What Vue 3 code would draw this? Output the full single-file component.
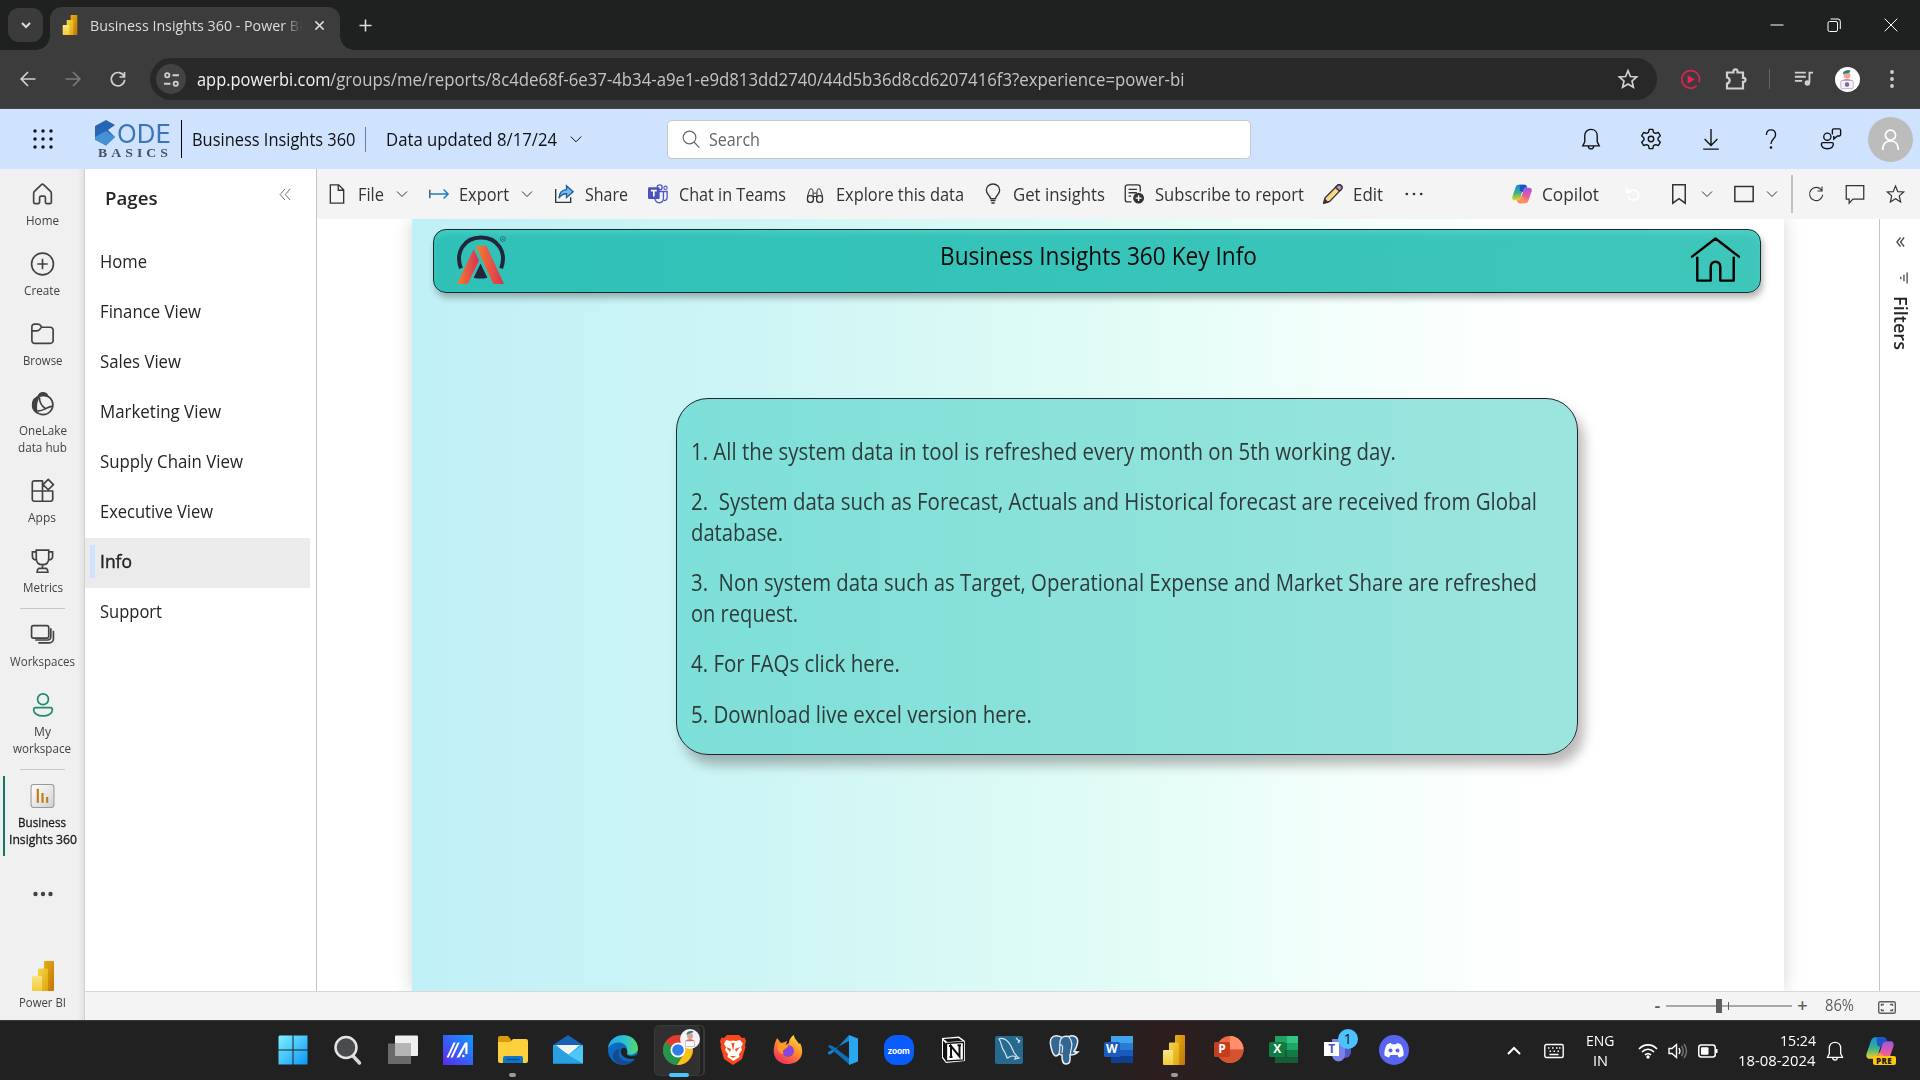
<script setup>
import { h } from 'vue'

// Condenses or widens a label so that it fills its intended length.
const vFit = {
  mounted(el, { value }) {
    const box = el.getBoundingClientRect()
    if (el.classList.contains('vertical')) {
      el.style.transform = `scaleY(${(value / box.height).toFixed(4)})`
      el.style.marginBottom = (value - box.height).toFixed(2) + 'px'
      return
    }
    el.style.transform = `scaleX(${(value / box.width).toFixed(4)})`
    el.style.marginRight = (value - box.width).toFixed(2) + 'px'
  },
}

const icons = {
  home: '<path d="M3.500 11.500C3.500 10.500 3.800 10 4.500 9.300L11 3q1-.8 2 0l6.500 6.300c.7.700 1 1.200 1 2.200V20q0 1.200-1.200 1.200H16q-1.200 0-1.200-1.200v-4.500q0-1.500-1.500-1.500h-2.600q-1.500 0-1.500 1.500V20q0 1.200-1.200 1.200H4.700Q3.500 21.200 3.500 20z" />',
  create: '<circle cx="12" cy="12" r="10.500"/><path d="M12 7v10M7 12h10"/>',
  browse: '<path d="M1.800 9V5A2.500 2.500 0 0 1 4.300 2.500h3.200c1.200 0 2 .5 2.700 1.400L11.200 5.500H19.500A2.700 2.700 0 0 1 22.200 8.200v10A2.700 2.700 0 0 1 19.500 21H4.500a2.700 2.700 0 0 1-2.700-2.700V9M1.800 9h4.700c2.600 0 2.400-1.500 4.700-3.500"/>',
  onelake: '<circle cx="12.600" cy="12.800" r="9.400"/><path d="M4 7.500C1.200 11.500 2 17.500 6.500 20.300 5.500 15 5.500 10 8.500 5.200zM8 4.500C9.500 .3 15.500.3 16.800 4.200c-2.500-.6-5.800-.4-8.800.3z" fill="currentColor"/><path d="M9 5.500c0 5 2 8.500 6.500 11.500M7 18.500c6 1 7.500-3.500 14.500-4.500"/>',
  apps: '<path d="M2.200 12V4A1.800 1.800 0 0 1 4 2.200h8v19.600H4A1.800 1.800 0 0 1 2.200 20v-8h19.600v8a1.800 1.800 0 0 1-1.800 1.800h-8M17.500.800l5 5-5 5-5-5z" stroke-linejoin="round"/>',
  metrics: '<path d="M6 1.500h12V9c0 4-2 6.500-6 6.500S6 13 6 9zM6 3.200H2.300V7.500c0 2.500 1.200 3.500 4 3.500M18 3.200h3.700V7.500c0 2.500-1.200 3.500-4 3.500M12 15.500V19M8.500 19h7c1.400.8 1.700 1.800 1.700 3.800H6.800c0-2 .3-3 1.700-3.800z"/>',
  workspaces: '<rect x="1.500" y="3" width="16.500" height="12" rx="1.800"/><path d="M20 5.500v8.300a3 3 0 0 1-3 3H5M22.500 8v7.500a4 4 0 0 1-4 4H8"/>',
  person: '<circle cx="12.500" cy="6.500" r="5.200"/><path d="M5.500 14.500h14c1.400 0 2 .8 2 2 0 3.500-4 6-9 6s-9-2.500-9-6c0-1.200.6-2 2-2z"/>',
  report: '<defs><linearGradient id="rg" x1="0" y1="0" x2="1" y2="1"><stop stop-color="#fff"/><stop offset="1" stop-color="#d0d0d0"/></linearGradient></defs><rect x="1" y="1" width="22" height="22" rx="2.500" fill="url(#rg)" stroke="#999" stroke-width="1"/><path d="M7.500 5v13.500M12 9v9.500M16.500 13v5.500" stroke="#c07a0c" stroke-width="2"/>',
  file: '<path d="M4 1h10l6 6v16H4zM13.500 1v6.500H20"/>',
  export: '<path d="M1 7v10" stroke="#444"/><path d="M1 12h22M17.500 6.500 23 12l-5.500 5.500" stroke="#1f7bc4" stroke-width="1.700"/>',
  share: '<path d="M2 6v16h18v-6" /><path d="M6 17C6.500 9.500 10 6.800 15 6.700V2l8 7.200-8 7.100V11.700c-4.500 0-7 1.500-9 5.300z" fill="#7cb8ea" stroke="#1a5fa0"/>',
  teams: '<circle cx="14" cy="4" r="3" stroke="#5059c9" fill="#fff" stroke-width="1.600"/><circle cx="21" cy="4.500" r="2" stroke="#5059c9" stroke-width="1.300"/><path d="M17 9h6v7c0 3-2 4-4 4M8 17c.5 3 2.500 5.500 5.500 5.500 3.500 0 5-2.500 5-6V9H13" stroke="#5059c9" stroke-width="1.600"/><rect x="0" y="4" width="14" height="14" rx="1.500" fill="#4b53bc" stroke="none"/><path d="M3.500 8h7M7 8v7" stroke="#fff" stroke-width="2"/>',
  explore: '<rect x="3" y="14" width="7" height="8" rx="3"/><rect x="14" y="14" width="7" height="8" rx="3"/><path d="M3 17V14.500L5.200 8a2 2 0 0 1 4.300 0L10 17M21 17v-2.500L18.800 8a2 2 0 0 0-4.300 0L14 17M10 11h4M10 15h4" stroke-width="1.200"/>',
  bulb: '<path d="M9 17.500C9 14 4 12.500 4 7.500a8 7.500 0 0 1 16 0c0 5-5 6.500-5 10zM9 19.800h6M10 22.800h4" stroke-width="1.600"/>',
  subscribe: '<path d="M9 21.500H4.500A3 3 0 0 1 1.500 18.500V4a3 3 0 0 1 3-3h12a3 3 0 0 1 3 3v5M5.500 6.500h10M5.500 10.500h10M5.500 14.500h3"/><circle cx="17.500" cy="17" r="6.500" fill="#333" stroke="none"/><path d="M17.500 13.500v7M14 17h7" stroke="#fff"/>',
  edit: '<path d="m1 23 1.500-6.500L17 2a2.700 2.700 0 0 1 5 4.500L8 21z" fill="#fbd68a"/><path d="m15 4 2-2a2.700 2.700 0 0 1 5 4.500l-2.500 2z" fill="#c48ad0"/><path d="m1 23 1-4.500L5.500 22z" fill="#444"/>',
  bookmark: '<path d="M4.500 1h15v22L12 17.500 4.500 23z"/>',
  frame: '<rect x="1" y="3" width="22" height="18"/>',
  refresh: '<path d="M19.500 7A8.800 8.800 0 1 0 21 13M20 2v6h-6"/>',
  comment: '<path d="M1.500 2h21v16H9.500L5 23V18H1.500z"/>',
  star: '<path d="m12 2 2.900 7 7.500.5-5.600 4.900 1.700 7.600L12 18l-6.500 4 1.700-7.600L1.600 9.500 9.100 9z"/>',
  bell: '<path d="M12 1.500c-4.200 0-6.800 3-6.800 7v6.500L3 19.500h18L18.800 15V8.500c0-4-2.600-7-6.800-7zM9 20c.3 1.800 1.300 2.800 3 2.800s2.700-1 3-2.800"/>',
  gear: '<circle cx="12" cy="12" r="3"/><path d="M10 1.500h4l.7 3.200 2.200 1.200 3.200-1 2.100 3.600-2.500 2.300v2.400l2.500 2.300-2.100 3.600-3.200-1-2.200 1.200-.7 3.200h-4l-.7-3.200-2.200-1.200-3.200 1-2.100-3.600 2.500-2.300v-2.400L1.800 8.500l2.100-3.600 3.200 1 2.200-1.200z" stroke-linejoin="round"/>',
  download: '<path d="M12 1v18M5 12l7 7 7-7M3.500 23h17"/>',
  help: '<path d="M7 7.500C7 4 9 2 12 2S17 4.200 17 7.300C17 11.500 12 12 12 17.500"/><circle cx="12" cy="21.300" r=".7" fill="currentColor"/>',
  feedback: '<circle cx="8" cy="9.500" r="3.900"/><path d="M3 16h10c1 0 1.500.6 1.500 1.500 0 3-2.500 5.200-6.500 5.200S1.500 20.500 1.500 17.500C1.500 16.600 2 16 3 16zM13.500 7V2.500A1.500 1.500 0 0 1 15 1h6A1.500 1.500 0 0 1 22.500 2.500v4.700A1.500 1.500 0 0 1 21 8.700H19L15 12V8.700"/>',
  user: '<circle cx="12" cy="7" r="5.800"/><path d="M3 24c0-6.500 3.400-10.500 9-10.500s9 4 9 10.500"/>',
  search: '<circle cx="10" cy="10" r="8.500"/><path d="m16 16 7 7.500"/>',
  pbi: '<defs><linearGradient id="p1" x2="1" y2="1"><stop stop-color="#e8b012"/><stop offset="1" stop-color="#c07408"/></linearGradient><linearGradient id="p2" x2="1" y2="1"><stop stop-color="#f5d64a"/><stop offset="1" stop-color="#e0a50c"/></linearGradient><linearGradient id="p3" x2="0" y2="1"><stop stop-color="#f9e589"/><stop offset="1" stop-color="#f2cb35"/></linearGradient></defs><g stroke="none"><rect x="13" width="10" height="30" rx="1" fill="url(#p1)"/><path d="M7 8.500A1 1 0 0 1 8 7.500h8a1 1 0 0 1 1 1V30H7z" fill="url(#p2)"/><path d="M1 16a1 1 0 0 1 1-1h8a1 1 0 0 1 1 1v14H2a1 1 0 0 1-1-1z" fill="url(#p3)"/></g>',
  copilot: '<defs><linearGradient id="c1" x2="0" y2="1"><stop stop-color="#1b8fe0"/><stop offset=".5" stop-color="#35b08f"/><stop offset="1" stop-color="#f5d020"/></linearGradient><linearGradient id="c2" x2="0" y2="1"><stop stop-color="#9b55e8"/><stop offset=".55" stop-color="#ee5a9a"/><stop offset="1" stop-color="#ff9a4d"/></linearGradient></defs><g stroke="none"><path d="M15 1H8C5.500 1 4.600 3 3.800 5.500L.500 15c-.8 2.800.4 4.500 2.700 4.500H7c1.800 0 2.600-1 3.200-3L13 7z" fill="url(#c1)"/><path d="M9 23h7c2.500 0 3.400-2 4.200-4.500L23.500 9c.8-2.800-.4-4.500-2.700-4.500H17c-1.800 0-2.600 1-3.200 3L11 17z" fill="url(#c2)"/><path d="M9 1h6.500c1.800 0 2.200 1.500 2.700 3.500H17c-1.800 0-2.600 1-3.200 3L13 10 9.500 8z" fill="#1d55c8"/><path d="M15 23H8.500C7 23 6.300 21.500 5.800 19.500H7c1.800 0 2.600-1 3.200-3l.8-2.500 3.500 2z" fill="#ff8f5a"/></g>',
}

const Icon = (p) => h('svg', { viewBox: p.box || '0 0 24 24', innerHTML: icons[p.name], class: 'ico' })
Icon.props = ['name', 'box']

const rail = [
  { icon: 'home', lines: [['Home', 33]] },
  { icon: 'create', lines: [['Create', 36]] },
  { icon: 'browse', lines: [['Browse', 39.500]] },
  { icon: 'onelake', lines: [['OneLake', 48], ['data hub', 49]] },
  { icon: 'apps', lines: [['Apps', 28]] },
  { icon: 'metrics', lines: [['Metrics', 40]], rule: true },
  { icon: 'workspaces', lines: [['Workspaces', 65]] },
  { icon: 'person', lines: [['My', 17], ['workspace', 58]], rule: true, tone: 'green' },
  { icon: 'report', lines: [['Business', 48], ['Insights 360', 68]], tone: 'active' },
]

const pages = [
  ['Home', 47], ['Finance View', 101], ['Sales View', 81], ['Marketing View', 121],
  ['Supply Chain View', 143], ['Executive View', 113], ['Info', 32], ['Support', 62],
]

const actions = [
  { icon: 'file', text: 'File', w: 26, menu: true },
  { icon: 'export', text: 'Export', w: 50, menu: true },
  { icon: 'share', text: 'Share', w: 43 },
  { icon: 'teams', text: 'Chat in Teams', w: 107 },
  { icon: 'explore', text: 'Explore this data', w: 128 },
  { icon: 'bulb', text: 'Get insights', w: 92 },
  { icon: 'subscribe', text: 'Subscribe to report', w: 149 },
  { icon: 'edit', text: 'Edit', w: 30 },
]

const notes = [
  [['1. All the system data in tool is refreshed every month on 5th working day.', 705]],
  [['2.\u00a0 System data such as Forecast, Actuals and Historical forecast are received from Global', 846], ['database.', 92]],
  [['3.\u00a0 Non system data such as Target, Operational Expense and Market Share are refreshed', 846], ['on request.', 107]],
  [['4. For FAQs click here.', 209]],
  [['5. Download live excel version here.', 341]],
]
</script>

<template>
  <div class="screen">
    <!-- browser tab strip -->
    <div class="tabs">
      <div class="tabmenu"><svg viewBox="0 0 12 12" class="s12"><path d="m2 4 4 4 4-4" stroke-width="2" /></svg></div>
      <div class="tab">
        <Icon name="pbi" box="0 0 24 30" class="fav" />
        <div class="tabtitle"><span v-fit="213">Business Insights 360 - Power BI</span></div>
        <svg viewBox="0 0 12 12" class="s12 tabx"><path d="m1.500 1.500 9 9m0-9-9 9" stroke-width="1.600" /></svg>
      </div>
      <svg viewBox="0 0 14 14" class="plus"><path d="M7 .5v13M.5 7h13" stroke-width="1.700" /></svg>
      <div class="winbtns">
        <svg viewBox="0 0 14 14"><path d="M.5 7h13" /></svg>
        <svg viewBox="0 0 14 14"><rect x="1" y="3.500" width="9.500" height="10" rx="1.500" /><path d="M3.500 1H11a2.300 2.300 0 0 1 2.300 2.300V11" /></svg>
        <svg viewBox="0 0 14 14"><path d="m.7.700 12.600 12.600m0-12.600L.7 13.300" /></svg>
      </div>
    </div>

    <!-- browser address bar -->
    <div class="navbar">
      <div class="navbtns">
        <svg viewBox="0 0 16 16"><path d="M15.500 8H1.500M8 1 1.200 8 8 15" /></svg>
        <svg viewBox="0 0 16 16" class="dim"><path d="M.5 8h14M8 1l6.800 7L8 15" /></svg>
        <svg viewBox="0 0 16 16"><path d="M14 5.200A6.700 6.700 0 1 0 14.700 8.800M14.500 1v5h-5" /></svg>
      </div>
      <div class="omnibox">
        <div class="tune"><svg viewBox="0 0 16 16"><circle cx="4" cy="4" r="2" /><path d="M9 4h6M1 12h6" /><circle cx="12" cy="12" r="2" /></svg></div>
        <span v-fit="133.500" class="host">app.powerbi.com</span><span v-fit="854.500" class="path">/groups/me/reports/8c4de68f-6e37-4b34-a9e1-e9d813dd2740/44d5b36d8cd6207416f3?experience=power-bi</span>
        <Icon name="star" class="fave" />
      </div>
      <div class="exts">
        <svg viewBox="0 0 22 22" class="rec"><path d="M17.500 17.500A9.200 9.200 0 1 1 19.800 14M14.500 19.500a9 9 0 0 1-3 .7" /><path d="M8 6.500v9l7.500-4.500z" fill="#f0205a" stroke="none" /></svg>
        <svg viewBox="0 0 22 22" class="puz"><path d="M2 4.500h6.500V3.300a2 2 0 0 1 4 0v1.200H18v5.300h.5a2 2 0 0 1 0 4H18v6.700H2v-5c3.500-.5 3.500-5.500 0-6z" /></svg>
        <i class="vr"></i>
        <svg viewBox="0 0 22 22" class="mus"><path d="M1 4h12M1 8.500h12M1 13h8M17 15V4h4" /><circle cx="14.700" cy="15.500" r="2" fill="#c7c7c7" /></svg>
        <svg viewBox="0 0 26 26" class="me"><circle cx="13" cy="13" r="13" fill="#fff" /><circle cx="12.500" cy="8.500" r="3.500" fill="#e9a98c" /><path d="M8.500 8c-.5-4 3-5 7.500-4.500-.5 2-1 3-3.500 3-2 0-3 .2-4 1.500z" fill="#23798b" /><path d="M7 15c.5-3 10.500-3 11 0z" fill="#d8404c" /><rect x="6" y="14" width="13" height="8.500" rx="1" fill="#f2f0f8" stroke="#b0a5c8" stroke-width=".8" /><circle cx="12.500" cy="18.200" r="1.300" fill="none" stroke="#77639a" /></svg>
        <svg viewBox="0 0 4 20" class="kebab"><circle cx="2" cy="3" r="1.900" /><circle cx="2" cy="10" r="1.900" /><circle cx="2" cy="17" r="1.900" /></svg>
      </div>
    </div>

    <!-- app header -->
    <header class="head">
      <svg viewBox="0 0 20 20" class="waffle"><template v-for="r in 3" :key="r"><circle v-for="c in 3" :key="c" :cx="r * 8 - 6" :cy="c * 8 - 6" r="1.700" /></template></svg>
      <div class="brand">
        <svg viewBox="0 0 22 26" class="cube"><path d="M0 6 11 0l9 5-7 5 7 7-9 8.500L0 19z" fill="#2866b4" /><path d="M0 17l11-6 9 6-9 8.500L0 20z" fill="#4690d4" /></svg>
        <div class="brandtext"><span v-fit="54" class="ode">ODE</span></div>
        <span v-fit="74" class="basics">BASICS</span>
      </div>
      <i class="bar1"></i>
      <span v-fit="163.500" class="htitle">Business Insights 360</span>
      <i class="bar2"></i>
      <span v-fit="171" class="hdate">Data updated 8/17/24</span>
      <svg viewBox="0 0 12 12" class="s12 hchev"><path d="m.7 3.500 5.300 5.300 5.300-5.300" /></svg>
      <div class="searchbox"><Icon name="search" /><span v-fit="51">Search</span></div>
      <div class="hicons">
        <Icon v-for="n in ['bell', 'gear', 'download', 'help', 'feedback']" :key="n" :name="n" />
      </div>
      <div class="avatar"><Icon name="user" /></div>
    </header>

    <div class="body">
      <!-- left rail -->
      <nav class="rail">
        <template v-for="r in rail" :key="r.icon">
          <div class="ritem" :class="r.tone">
            <Icon :name="r.icon" />
            <div v-for="l in r.lines" :key="l[0]" class="rl"><span v-fit="l[1]">{{ l[0] }}</span></div>
          </div>
          <div v-if="r.rule" class="rrule"></div>
        </template>
        <svg viewBox="0 0 20 6" class="rdots"><circle cx="2.500" cy="3" r="2.200" /><circle cx="10" cy="3" r="2.200" /><circle cx="17.500" cy="3" r="2.200" /></svg>
        <div class="rpbi"><Icon name="pbi" box="0 0 24 30" /><div class="rl"><span v-fit="47">Power BI</span></div></div>
      </nav>

      <div class="work">
        <div class="upper">
          <!-- page list -->
          <aside class="pages">
            <div class="phead">
              <span v-fit="52.500">Pages</span>
              <svg viewBox="0 0 12 14"><path d="M6 1 .8 7 6 13M11.500 1 6.300 7l5.200 6" /></svg>
            </div>
            <div v-for="p in pages" :key="p[0]" class="page" :class="{ on: p[0] === 'Info' }"><span v-fit="p[1]">{{ p[0] }}</span></div>
          </aside>

          <div class="main">
            <div class="toolbar">
              <div v-for="a in actions" :key="a.text" class="act">
                <Icon :name="a.icon" />
                <span v-fit="a.w">{{ a.text }}</span>
                <svg v-if="a.menu" viewBox="0 0 12 12" class="s12"><path d="m1 3.500 5 5 5-5" /></svg>
              </div>
              <svg viewBox="0 0 20 6" class="more"><circle cx="2" cy="3" r="1.500" /><circle cx="10" cy="3" r="1.500" /><circle cx="18" cy="3" r="1.500" /></svg>
              <div class="tright">
                <Icon name="copilot" class="cop" /><span v-fit="57" class="coptext">Copilot</span>
                <svg viewBox="0 0 20 20" class="undo"><path d="M2 2v6h6M3 7.500C7 3 17 4 17 11.500c0 8-12 8-13 1" /></svg>
                <Icon name="bookmark" class="bm" />
                <svg viewBox="0 0 12 12" class="s12 c1"><path d="m1 3.500 5 5 5-5" /></svg>
                <Icon name="frame" class="fr" />
                <svg viewBox="0 0 12 12" class="s12 c2"><path d="m1 3.500 5 5 5-5" /></svg>
                <i class="tvr"></i>
                <Icon name="refresh" class="rf" /><Icon name="comment" class="cm" /><Icon name="star" class="st" />
              </div>
            </div>

            <div class="canvas">
              <div class="stage">
                <div class="report">
                  <div class="banner">
                    <svg viewBox="0 0 50 52" class="alogo">
                      <defs><linearGradient id="a1"><stop stop-color="#f08030" /><stop offset="1" stop-color="#dc2f55" /></linearGradient></defs>
                      <path d="M4 35C-2 19 7 3.500 24.500 3.500S51 19 45 35" fill="none" stroke="#23253a" stroke-width="4" />
                      <path d="M17 15.500 22.500 27 11 51H0z" fill="url(#a1)" /><path d="M19 12h11l18 39H37z" fill="url(#a1)" />
                      <path d="M24 30l7 14.500q-7 2-14 0z" fill="#23253a" /><circle cx="46.800" cy="5" r="2.500" fill="none" stroke="#24555a" stroke-width=".7" /><circle cx="46.800" cy="5" r=".8" fill="#24555a" />
                    </svg>
                    <span v-fit="317" class="btitle">Business Insights 360 Key Info</span>
                    <svg viewBox="0 0 52 48" class="bhome"><path d="M1.500 20.500 26 1.500l24.500 19M7 21.500v24h14V31c0-7 10-7 10 0v14.500h14v-24" /></svg>
                  </div>
                  <div class="card">
                    <div v-for="(n, i) in notes" :key="i" class="note">
                      <div v-for="l in n" :key="l[0]"><span v-fit="l[1]">{{ l[0] }}</span></div>
                    </div>
                  </div>
                </div>
              </div>
              <aside class="filters">
                <svg viewBox="0 0 10 12" class="fchev"><path d="M5 1 1 6l4 5M9 1 5 6l4 5" /></svg>
                <svg viewBox="0 0 10 12" class="ficon"><path d="M9 0v12M5.500 2.500v7M2 4.500v3" /></svg>
                <span v-fit="54" class="vertical">Filters</span>
              </aside>
            </div>
          </div>
        </div>
        <footer class="status">
          <b>-</b>
          <svg viewBox="0 0 126 14" class="slider"><path d="M0 7h126M62.500 3v8" /><rect x="50" y="0" width="6" height="14" fill="#605e5c" stroke="none" /></svg>
          <b>+</b>
          <span v-fit="29" class="pct">86%</span>
          <svg viewBox="0 0 18 13" class="fit"><rect x=".7" y=".7" width="16.600" height="11.600" rx="1.500" /><path d="M3.500 5V3.500H6M12 3.500h2.500V5M14.500 8v1.500H12M6 9.500H3.500V8" /></svg>
        </footer>
      </div>
    </div>

    <!-- desktop taskbar -->
    <div class="taskbar">
      <div class="dock">
        <div><svg viewBox="0 0 30 30"><defs><linearGradient id="w" x2="1" y2="1" gradientUnits="userSpaceOnUse" gradientTransform="scale(30)"><stop stop-color="#80f3ff" /><stop offset="1" stop-color="#0a93f8" /></linearGradient></defs><path d="M1.500.500H14.500v14H.500v-13zM15.500 .500h14v14h-14zM.500 15.500h14v14H.500zM15.500 15.500h14v14h-14z" fill="url(#w)" /></svg></div>
        <div><svg viewBox="0 0 30 30"><path d="m20 21 6.500 7" stroke="#d5d8db" stroke-width="3.500" stroke-linecap="round" /><circle cx="13" cy="12.500" r="10.500" fill="#4a4b4c" stroke="#e2e4e6" stroke-width="2.500" /></svg></div>
        <div><svg viewBox="0 0 30 30"><rect x="7" y=".5" width="23" height="20.500" rx="1" fill="#efefef" /><path d="M0 8.500h23V29H0z" fill="#777" fill-opacity=".85" /><path d="M7 8.500h16V21H7z" fill="#b5b5b5" /></svg></div>
        <div><svg viewBox="0 0 30 30"><defs><linearGradient id="m" x1="0" y1="1" x2="1" y2="0"><stop stop-color="#5a28f0" /><stop offset="1" stop-color="#109cff" /></linearGradient></defs><path d="M0 0h30v30H0z" fill="url(#m)" /><path d="m3.500 22.500 7-15h2.200l-7 15zM7.500 22.500l7-15h2.200l-7 15zM13.500 22.500l8.500-15h2.500V19h-2.200v-7.500l-6 11z" fill="#fff" /><circle cx="20.300" cy="21" r="1.300" fill="#fff" /></svg></div>
        <div class="run"><svg viewBox="0 0 30 30"><path d="M0 3a2 2 0 0 1 2-2h8l3 3.500V8H0z" fill="#dc9a06" /><path d="M0 7h12l3-3h13a2 2 0 0 1 2 2v20a2 2 0 0 1-2 2H2a2 2 0 0 1-2-2z" fill="#fccf3d" /><path d="M5 28v-5a2 2 0 0 1 2-2h16a2 2 0 0 1 2 2v5z" fill="#0d76c8" /><path d="M8.500 24.500h13" stroke="#064c8a" stroke-width="1.500" /></svg></div>
        <div><svg viewBox="0 0 30 30"><path d="M0 10 15 0l15 10v2H0z" fill="#1463b5" /><path d="M0 10h30v18.500H0z" fill="#2ba7e8" /><path d="M3 10h24L15 20z" fill="#f4f4f4" /><path d="m0 10 30 18.500H0z" fill="#28a0e4" /><path d="M30 10v18.500L15 20z" fill="#4fc8f5" /></svg></div>
        <div><svg viewBox="0 0 30 30"><defs><linearGradient id="e"><stop stop-color="#1fa8e8" /><stop offset=".6" stop-color="#2fc3cf" /><stop offset="1" stop-color="#58dc5a" /></linearGradient></defs><circle cx="15" cy="15" r="15" fill="#0c69bd" /><path d="M0 13C2-3 28-5 30 13c0 6-7 8-11 6-2-1 0-2 0-5C18 6 6 5 0 13z" fill="url(#e)" /><path d="M11 16c-2 8 7 13 15 9-6 7-16 6-20 0-3-5 0-11 6-11z" fill="#134a92" /><path d="M13 15c-1 5 3 8 9 9h6l2-5c-4 3-10 3-11 0 0-1 1-2 0-4-1-3-5-3-6 0z" fill="#212121" /></svg></div>
        <div class="focus"><svg viewBox="0 0 30 30"><circle cx="15" cy="15" r="15" fill="#e33b2e" /><path d="M15 15 2 7.500A15 15 0 0 0 14 30l7-11z" fill="#23964a" /><path d="M15 8h13A15 15 0 0 1 14 30l7.500-12z" fill="#fbc116" /><circle cx="15" cy="15" r="7.500" fill="#fff" /><circle cx="15" cy="15" r="5.800" fill="#2f7de9" /></svg>
          <svg viewBox="0 0 20 20" class="pbadge"><circle cx="10" cy="10" r="10" fill="#f3f3f5" /><circle cx="10" cy="7" r="3" fill="#e0a08b" /><path d="M6.500 6c0-4 4-4.500 7-3.500-.5 2-4 1-7 3.500z" fill="#23798b" /><path d="M5.500 12.500c1-3 8-3 9 0z" fill="#d8404c" /><rect x="5.500" y="12" width="9" height="5.500" fill="#fff" stroke="#b9aecb" stroke-width=".7" /></svg></div>
        <div><svg viewBox="0 0 30 30"><path d="m9 0h12l3 3 2.500-.5L28 6l-1 4 .5 2-3.500 12-9 6-9-6L2.500 12 3 10 2 6l1.500-3.500L6 3z" fill="#f8481c" /><path d="m8 5 4 1 3-.5 3 .5 4-1 3 4-2 3 1 3-3 4 .500 3-6 4-6-4 .500-3-3-4 1-3-2-3z" fill="#fff" /><path d="m8 12 5 2-1 3zM22 12l-5 2 1 3zM12 21h6l-3 2zM13.500 8h3L15 16z" fill="#f8481c" /></svg></div>
        <div><svg viewBox="0 0 30 30"><defs><linearGradient id="f" x1=".8" y1="0" x2=".2" y2="1"><stop stop-color="#ffe23c" /><stop offset=".45" stop-color="#ff8a2c" /><stop offset="1" stop-color="#ef2766" /></linearGradient></defs><path d="M2 8 4 3l4 5 4-1c1-1 2-1 2-1l-1 4 3-2c0-4 3-7 5-8 0 4 3 5 5 9l1-1c6 12-1 21-12 21S-2 21 2 8z" fill="url(#f)" /><circle cx="15" cy="16" r="6" fill="#8747d8" /><path d="M5 9c5-2 8 1 11 2l-4 3c-2 1-3 3-1 5-5 0-8-5-6-10z" fill="#ff9b25" /></svg></div>
        <div><svg viewBox="0 0 30 30"><path d="M21 0 5 17.500l-3.500 2.300L0 18.500V17L21 6z" fill="#1585d0" /><path d="M0 11.500 1.800 10l3.500 1.500L22 24v6z" fill="#0d6fb8" /><path d="m21 0 9 3.500v23L21 30V0z" fill="#2aa5f0" /></svg></div>
        <div><svg viewBox="0 0 30 30"><rect width="30" height="30" rx="12" fill="#0b5cff" /></svg><b class="zoom">zoom</b></div>
        <div><svg viewBox="0 0 30 30"><path d="m3 3 17-1.500 6 4.500v20l-19 2-4-5z" fill="#fff" /><path d="m4.500 4 15-1 4 3-15 1z" fill="#111" /><path d="M7.500 8.500 24.500 7.300v17.500L7.500 26z" fill="#fff" stroke="#111" stroke-width="1.300" /><path d="m4 5.500 3 3V26l-3-4z" fill="#111" /><path d="M12 22v-11l8.500 10.500V10M10 11h3M18.500 10.300h3.500M10.500 22h3" stroke="#111" stroke-width="2" fill="none" /></svg></div>
        <div><svg viewBox="0 0 30 30"><rect x="1" y="1" width="28" height="28" rx="2" fill="#276a90" /><path d="M5 4c5-2 9 2 12 7 2 4 2 8 8 12l-4 1 1-2c-5-3-7 1-9 1-1-3-1-4-3-7-3-3-2-8-5-12zM22 3l4 4M24 8l2-3" stroke="#d9e8ef" stroke-width="1.200" fill="none" /></svg></div>
        <div><svg viewBox="0 0 30 30"><path d="M9 1C3 0 0 4 2 12c1 5 3 9 5 9 2-.5 3-2 3-2s2 1 3 1c0 4 0 9 4 9 5 0 4-5 4-9 3 0 6-1 8-3-2 0-3 0-4-.5C28 12 31 4 26 1.500c-3-1.500-6 0-6 0s-5-1-7 1C12 1.500 10.500 1.200 9 1z" fill="#336791" stroke="#e6edf2" stroke-width="1.500" /><path d="M13 2.500C9 6 12 12 10 19M20 2c4 5 3 9 2 13-1 2 0 4-1 5M11 10c3-1 3 3 2 8" stroke="#e6edf2" stroke-width="1.200" fill="none" /></svg></div>
        <div class="office"><svg viewBox="0 0 30 30"><path d="M7 1h22v8H7z" fill="#41a5ee" /><path d="M7 8h22v8H7z" fill="#2b7cd3" /><path d="M7 15h22v7H7z" fill="#185abd" /><path d="M7 21h22v7H7z" fill="#103f91" /><rect y="7" width="16" height="15" rx="1.500" fill="#185abd" /></svg><b>W</b></div>
        <div class="run"><Icon name="pbi" box="0 0 24 30" /></div>
        <div class="office"><svg viewBox="0 0 30 30"><circle cx="16" cy="14.500" r="13.500" fill="#ed6c47" /><path d="M16 1A13.500 13.500 0 0 1 29.500 14.500H16z" fill="#ff8f6b" /><path d="M3 18a13.500 13.500 0 0 0 26.500-3.500H16z" fill="#d35230" /><rect y="7" width="16" height="15" rx="1.500" fill="#c43e1c" /></svg><b>P</b></div>
        <div class="office"><svg viewBox="0 0 30 30"><path d="M6 1h12v8H6z" fill="#21a366" /><path d="M18 1h11v8H18z" fill="#33c481" /><path d="M6 8h12v7H6z" fill="#107c41" /><path d="M18 8h11v7H18z" fill="#21a366" /><path d="M6 15h23v13H6z" fill="#185c37" /><path d="M18 15h11v7H18z" fill="#107c41" /><rect y="7" width="16" height="15" rx="1.500" fill="#107c41" /></svg><b>X</b></div>
        <div class="office tm"><svg viewBox="0 0 30 30"><path d="M16 8h11v9a6 6 0 0 1-6 6h-5z" fill="#5059c9" /><path d="M8 4h13v16a6.500 6.500 0 0 1-13 0z" fill="#7b83eb" /><rect y="7" width="15" height="14" fill="#fff" /></svg><b>T</b><i>1</i></div>
        <div><svg viewBox="0 0 30 30"><circle cx="15" cy="15" r="15" fill="#5865f2" /><path d="M8 9.500c2-1.200 4-1.500 4-1.500l.8 1.300h4.400L18 8s2 .3 4 1.500c2 3 3 7 2.500 11-2 1.500-4.500 2-4.500 2L18.500 20h-7L10 22.500s-2.500-.5-4.500-2C5 16.500 6 12.500 8 9.500z" fill="#fff" /><circle cx="11.500" cy="15.500" r="2" fill="#5865f2" /><circle cx="18.500" cy="15.500" r="2" fill="#5865f2" /></svg></div>
      </div>
      <div class="tray">
        <svg viewBox="0 0 14 14" class="up"><path d="m1 10 6-6 6 6" stroke-width="2" /></svg>
        <svg viewBox="0 0 20 16" class="kb"><rect x=".8" y="1.500" width="18.400" height="13" rx="1.500" stroke-width="1.400" /><path d="M4 5h1.500M8 5h1.500M12 5h1.500M15 5h1.500M5.500 8.200H7M9.500 8.200H11M13.500 8.200H15M5.500 11.500h9" stroke-width="1.500" /></svg>
        <div class="lang"><span v-fit="28.500">ENG</span><span v-fit="15">IN</span></div>
        <svg viewBox="0 0 20 16" class="wifi"><path d="M1 6C6 .500 14 .500 19 6M4 9c3.500-3.700 8.500-3.700 12 0M7 12c1.700-1.800 4.300-1.800 6 0" stroke-width="1.600" /><circle cx="10" cy="14" r="1.700" fill="#fff" stroke="none" /></svg>
        <svg viewBox="0 0 20 16" class="spk"><path d="M1 5.500h3L8.500 1.500v13L4 10.500H1z" stroke-width="1.400" /><path d="M11 5q1.800 3 0 6" stroke-width="1.400" /><path d="M13.500 3q3.500 5 0 10M16 1q5 7 0 14" stroke="#777" stroke-width="1.400" /></svg>
        <svg viewBox="0 0 20 16" class="bat"><rect x=".8" y="2" width="16.400" height="12" rx="2.500" stroke-width="1.500" /><rect x="3" y="4.200" width="7.500" height="7.600" rx="1" fill="#fff" stroke="none" /><path d="M18.500 6v4" stroke-width="2" /></svg>
        <div class="clock"><span v-fit="36" class="t1">15:24</span><span v-fit="77.500" class="t2">18-08-2024</span></div>
        <Icon name="bell" class="tbell" />
        <div class="pre"><Icon name="copilot" /><b>PRE</b></div>
      </div>
    </div>
  </div>
</template>

<style>
body { margin: 0; background: #212121; overflow: hidden; }
svg { display: block; flex: none; fill: none; stroke: currentColor; overflow: visible; }
.ico { width: 20px; height: 20px; stroke-width: 1.5; }
</style>

<style scoped>
.screen { width: 1920px; height: 1080px; display: flex; flex-direction: column; overflow: hidden; font-family: "Open Sans", "Noto Sans", sans-serif; font-size: 17.500px; color: #252423; white-space: nowrap; }
.screen * { box-sizing: border-box; }
.screen span { display: inline-block; flex: none; transform-origin: 0 0; }
.s12 { width: 12px; height: 12px; }

.tabs { height: 50px; flex: none; background: #1f2120; color: #dcdcdc; display: flex; align-items: center; font-size: 15px; }
.tabmenu { width: 35px; height: 34px; margin: 0 7px 0 8px; border-radius: 11px; background: #3b3b3b; display: grid; place-items: center; }
.tab { position: relative; align-self: flex-end; width: 290px; height: 43px; background: #3c3c3c; border-radius: 12px 12px 0 0; display: flex; align-items: center; padding: 0 0 7px 11px; }
.tab::before, .tab::after { content: ""; position: absolute; bottom: 0; width: 14px; height: 14px; }
.tab::before { left: -14px; background: radial-gradient(circle at 0 0, transparent 13.500px, #3c3c3c 14px); }
.tab::after { right: -14px; background: radial-gradient(circle at 100% 0, transparent 13.500px, #3c3c3c 14px); }
.fav { width: 18px; height: 20px; margin-right: 11px; }
.tabtitle { width: 212px; overflow: hidden; -webkit-mask-image: linear-gradient(90deg, #000 91%, transparent 100%); mask-image: linear-gradient(90deg, #000 91%, transparent 100%); }
.tabx { margin-left: 12px; width: 11px; height: 11px; }
.plus { width: 13px; height: 13px; margin-left: 19px; }
.winbtns { margin-left: auto; display: flex; gap: 43px; margin-right: 22px; color: #fff; }
.winbtns svg { width: 14px; height: 14px; }

.navbar { height: 59px; flex: none; background: #3c3c3c; display: flex; align-items: center; color: #d0d0d0; border-bottom: 1px solid #4b4848; }
.navbtns { width: 150px; display: flex; gap: 29px; padding-left: 19.500px; flex: none; }
.navbtns svg { width: 16px; height: 16px; stroke-width: 1.700; }
.navbtns .dim { color: #7a7a7a; }
.omnibox { width: 1507px; height: 42px; border-radius: 21px; background: #282828; display: flex; align-items: center; flex: none; font-size: 17.300px; }
.tune { width: 30px; height: 30px; margin: 0 10.500px 0 6px; border-radius: 50%; background: #434343; display: grid; place-items: center; }
.tune svg { width: 17px; height: 17px; stroke-width: 1.700; }
.host { color: #f0f0f0; }
.path { color: #c4c4c4; }
.fave { margin-left: auto; margin-right: 19px; stroke-width: 2; }
.exts { flex: 1; display: flex; align-items: center; padding-left: 22.500px; stroke-width: 2; }
.rec { width: 21px; height: 21px; color: #d82455; stroke-width: 1.800; }
.puz { width: 22px; height: 22px; margin-left: 24px; stroke-width: 2.200; }
.vr { width: 1px; height: 20px; background: #666; margin: 0 24px 0 22px; }
.mus { width: 20px; height: 20px; stroke-width: 2; }
.me { width: 25px; height: 25px; margin-left: 21px; stroke: none; }
.kebab { width: 4px; height: 20px; margin-left: 30px; fill: currentColor; stroke: none; }

.head { height: 60px; flex: none; background: #cfe3ff; display: flex; align-items: center; color: #111; }
.waffle { width: 20px; height: 20px; margin: 0 42.500px 0 32.500px; fill: #111; stroke: none; }
.brand { width: 86px; height: 40px; display: grid; grid-template-columns: 22px 64px; grid-template-rows: 26px 14px; justify-items: start; margin-top: 2px; }
.cube { width: 22px; height: 26px; stroke: none; }
.brandtext { height: 26px; line-height: 26px; margin-top: 2px; }
.ode { height: 24px; line-height: 24px; font-family: Inter, sans-serif; font-size: 25px; font-weight: 400; color: #3b76b8; }
.basics { grid-column: 1 / 3; font-family: "Liberation Serif", serif; font-weight: 700; font-size: 13.500px; line-height: 14px; height: 14px; letter-spacing: 4px; color: #4a5060; margin-left: 3px; }
.bar1 { width: 1px; height: 38px; background: #000; }
.htitle { margin-left: 10px; }
.bar2 { width: 1px; height: 25px; background: #6d7b90; margin: 0 20.500px 0 9px; }
.hchev { margin-left: 13px; }
.searchbox { width: 584px; height: 39px; margin-left: 85px; background: #fff; border: 1px solid #c8c8c8; border-radius: 5px; display: flex; align-items: center; gap: 9px; padding-left: 14px; color: #666; }
.searchbox .ico { width: 18px; height: 18px; }
.hicons { margin-left: auto; display: flex; gap: 38px; margin-right: 26px; }
.hicons .ico { width: 22px; height: 22px; }
.avatar { width: 45px; height: 45px; border-radius: 50%; background: #bcbcbc; color: #fff; display: grid; place-items: center; margin-right: 7px; }
.avatar .ico { width: 21px; height: 21px; stroke-width: 2; }

.body { flex: 1; min-height: 0; display: flex; }
.rail { width: 85px; flex: none; background: linear-gradient(90deg, #f0f0f0 92%, #e2e2e2); display: flex; flex-direction: column; align-items: center; font-size: 12.500px; color: #424242; border-right: 1px solid #d0d0d0; }
.ritem { width: 100%; padding: 12px 0 10px; display: flex; flex-direction: column; align-items: center; }
.ritem .ico { width: 25px; height: 26px; margin-bottom: 5px; stroke-width: 1.600; margin-left: 1px; }
.ritem .rl, .rpbi .rl { height: 17px; line-height: 17px; margin-left: 1px; }
.green .ico { color: #1f8a70; }
.active { position: relative; color: #1a1a1a; -webkit-text-stroke: .3px; }
.active::before { content: ""; position: absolute; left: 3px; top: 5px; width: 2px; height: 80px; background: #117865; }
.rrule { width: 45px; height: 1px; background: #c8c8c8; margin: 2px 0 1px; flex: none; }
.rdots { width: 20px; height: 6px; fill: #424242; stroke: none; margin: 33px 0 0 1px; }
.rpbi { margin-top: auto; margin-bottom: 9px; display: flex; flex-direction: column; align-items: center; gap: 3px; }
.rpbi .ico { width: 24px; height: 30px; margin-left: 2px; }

.work { flex: 1; display: flex; flex-direction: column; min-width: 0; }
.upper { flex: 1; min-height: 0; display: flex; border-bottom: 1px solid #d8d8d8; }
.pages { width: 232px; flex: none; background: #fff; border-right: 1px solid #c4c4c4; }
.phead { height: 69px; padding: 0 25px 11px 20px; display: flex; justify-content: space-between; align-items: center; font-size: 18px; font-weight: 600; }
.phead svg { width: 12px; height: 13px; color: #666; margin-bottom: 7px; }
.page { height: 50px; line-height: 46px; padding-left: 15px; width: 225px; }
.page.on { background: linear-gradient(#cfe3ff, #cfe3ff) 5px 7px / 5px 33px no-repeat #ebebeb; -webkit-text-stroke: .4px; }

.main { flex: 1; display: flex; flex-direction: column; min-width: 0; }
.toolbar { height: 50px; flex: none; background: #f4f4f4; display: flex; align-items: center; padding-left: 10px; color: #333; }
.act { display: flex; align-items: center; margin-right: 19.600px; }
.act:nth-child(-n+3) { margin-right: 20.700px; }
.act .ico { margin-right: 10.300px; stroke-width: 1.600; }
.act:nth-child(-n+3) .ico { margin-right: 10.800px; }
.act:nth-child(n+5) { margin-right: 19.200px; }
.act .s12 { margin-left: 12px; }
.more { width: 18px; height: 6px; fill: #333; stroke: none; margin-left: 3px; }
.tright { margin-left: auto; display: flex; align-items: center; padding-right: 15.500px; }
.coptext { margin-left: 10px; }
.undo { width: 16px; height: 16px; margin-left: 26px; color: #fff; stroke-width: 2; }
.bm { margin-left: 28px; stroke-width: 1.800; }
.c1 { margin-left: 12px; }
.fr { margin-left: 21px; stroke-width: 1.800; }
.c2 { margin-left: 12px; }
.tvr { width: 2px; height: 38px; background: #c5bfba; margin: 0 14px 0 13px; }
.rf { width: 18px; height: 20px; }
.cm { margin-left: 20px; }
.st { margin-left: 21px; width: 19px; }

.canvas { flex: 1; min-height: 0; display: flex; background: #fff; }
.stage { flex: 1; overflow: hidden; padding-left: 95px; }
.report { width: 1372px; height: 100%; background: linear-gradient(90deg, #c0f0f7 0, #cdf5f5 24%, #e2fcf6 52%, #f5fffc 70%, #fff 82%); box-shadow: 0 0 18px rgba(0, 0, 0, .17); padding: 10px 21px 0; }
.banner { width: 1328px; height: 64px; border: 1px solid #102c2c; border-radius: 13px; background: linear-gradient(90deg, #2fc1b8, #3fc6ba); box-shadow: 2px 5px 6px rgba(80, 80, 80, .4), inset 0 6px 8px -4px rgba(130, 230, 225, .4); display: flex; align-items: center; padding: 0 19px 0 22.500px; }
.alogo { width: 49px; height: 51px; stroke: none; margin-bottom: 3px; }
.btitle { margin-top: -12px; margin-left: 434px; font-size: 25.500px; color: #0b0b0b; }
.bhome { width: 51px; height: 46px; color: #000; stroke-width: 2.500; stroke-linecap: round; stroke-linejoin: round; margin: 0 0 3px auto; }
.card { width: 902px; height: 357px; margin: 105px 0 0 243px; padding: 36.500px 14px; border: 1px solid #223; border-radius: 32px; background: linear-gradient(90deg, #7ddfd9, #8be2da 45%, #9ce5de); box-shadow: 6px 10px 12px rgba(70, 60, 60, .36); font-size: 23px; line-height: 31.200px; color: #2f3b3b; }
.note { margin-bottom: 19px; }
.note > div { height: 31.200px; }

.filters { width: 41px; flex: none; border-left: 1px solid #c4c4c4; display: flex; flex-direction: column; align-items: center; color: #444; padding-top: 17px; }
.fchev { width: 9px; height: 12px; stroke-width: 1.400; }
.ficon { width: 9px; height: 12px; margin: 24px 0 0 6px; stroke-width: 1.400; }
.vertical { writing-mode: vertical-rl; font-size: 18px; font-weight: 600; margin: 12px 0 0 1px; line-height: 20px; color: #252423; }

.status { height: 28px; flex: none; background: #f4f4f4; display: flex; align-items: center; justify-content: flex-end; padding-right: 24px; color: #605e5c; }
.status b { font-size: 18px; font-weight: 600; width: 11px; text-align: center; margin-bottom: 2px; }
.slider { width: 126px; height: 14px; margin: 0 5px 0 3px; }
.pct { font-size: 15.500px; margin: -2px 0 0 17px; }
.fit { width: 18px; height: 13px; margin: 3px 0 0 24px; stroke-width: 1.400; }

.taskbar { height: 60px; flex: none; background: linear-gradient(90deg, #212121 57%, #2c1e1e 60%, #2c1e1e 62%, #212121 65%); border-top: 1px solid #3a3a3a; display: flex; align-items: center; color: #fff; padding-left: 265px; }
.dock { display: flex; height: 59px; }
.dock > div { position: relative; width: 55.100px; display: grid; place-items: center; }
.dock svg { width: 30px; height: 30px; stroke-width: 0; stroke: none; }
.dock > div > svg { margin-bottom: 1px; }
.dock .ico { width: 24px; }
.dock .run::after, .dock .focus::after { content: ""; position: absolute; bottom: 3px; left: 24px; width: 7px; height: 4px; border-radius: 2px; background: #9a9a9a; }
.dock .focus::before { content: ""; position: absolute; inset: 4px 6px 4px 3px; border-radius: 5px; background: #303030; border: 1px solid #3a3a3a; box-shadow: 4px 0 0 -1px #212121, 5px 0 0 0 #383838; }
.dock .focus::after { left: 18px; width: 20px; background: #4cc2ff; }
.dock .focus svg { z-index: 1; }
.dock .pbadge { position: absolute; width: 20px; height: 20px; left: 29px; top: 8px; z-index: 2; }
.zoom { position: absolute; font: 700 8.500px Inter, sans-serif; letter-spacing: -.2px; }
.office b { position: absolute; left: 12.500px; top: 20px; width: 16px; text-align: center; font: 700 12px/16px "Open Sans", sans-serif; }
.tm b { color: #4b53bc; top: 20px; left: 12px; }
.tm i { position: absolute; left: 26px; top: 8px; width: 20px; height: 20px; border-radius: 50%; background: #4cc2ff; color: #111; font: 14px/20px "Open Sans", sans-serif; text-align: center; }
.tray { margin-left: auto; display: flex; align-items: center; padding-right: 24.500px; font-size: 15px; height: 59px; }
.up { width: 14px; height: 14px; }
.kb { width: 20px; height: 16px; margin-left: 23px; }
.lang { width: 29px; display: flex; flex-direction: column; align-items: center; line-height: 20px; margin: -2px 0 0 22px; }
.wifi { width: 20px; height: 16px; margin-left: 23px; }
.spk { width: 20px; height: 16px; margin-left: 10px; }
.bat { width: 20px; height: 16px; margin-left: 10px; }
.clock { display: flex; flex-direction: column; align-items: flex-end; line-height: 20px; margin: -2px 0 0 20px; }
.tbell { margin-left: 9px; }
.pre { position: relative; margin-left: 21px; width: 30px; height: 30px; }
.pre .ico { width: 28px; height: 28px; margin-top: 0; }
.pre b { position: absolute; left: 7px; bottom: 1px; width: 23px; height: 9px; border-radius: 2px; background: #ffc60a; color: #1a1a1a; font: 800 8px/9px "Open Sans", sans-serif; text-align: center; letter-spacing: .4px; }
</style>
